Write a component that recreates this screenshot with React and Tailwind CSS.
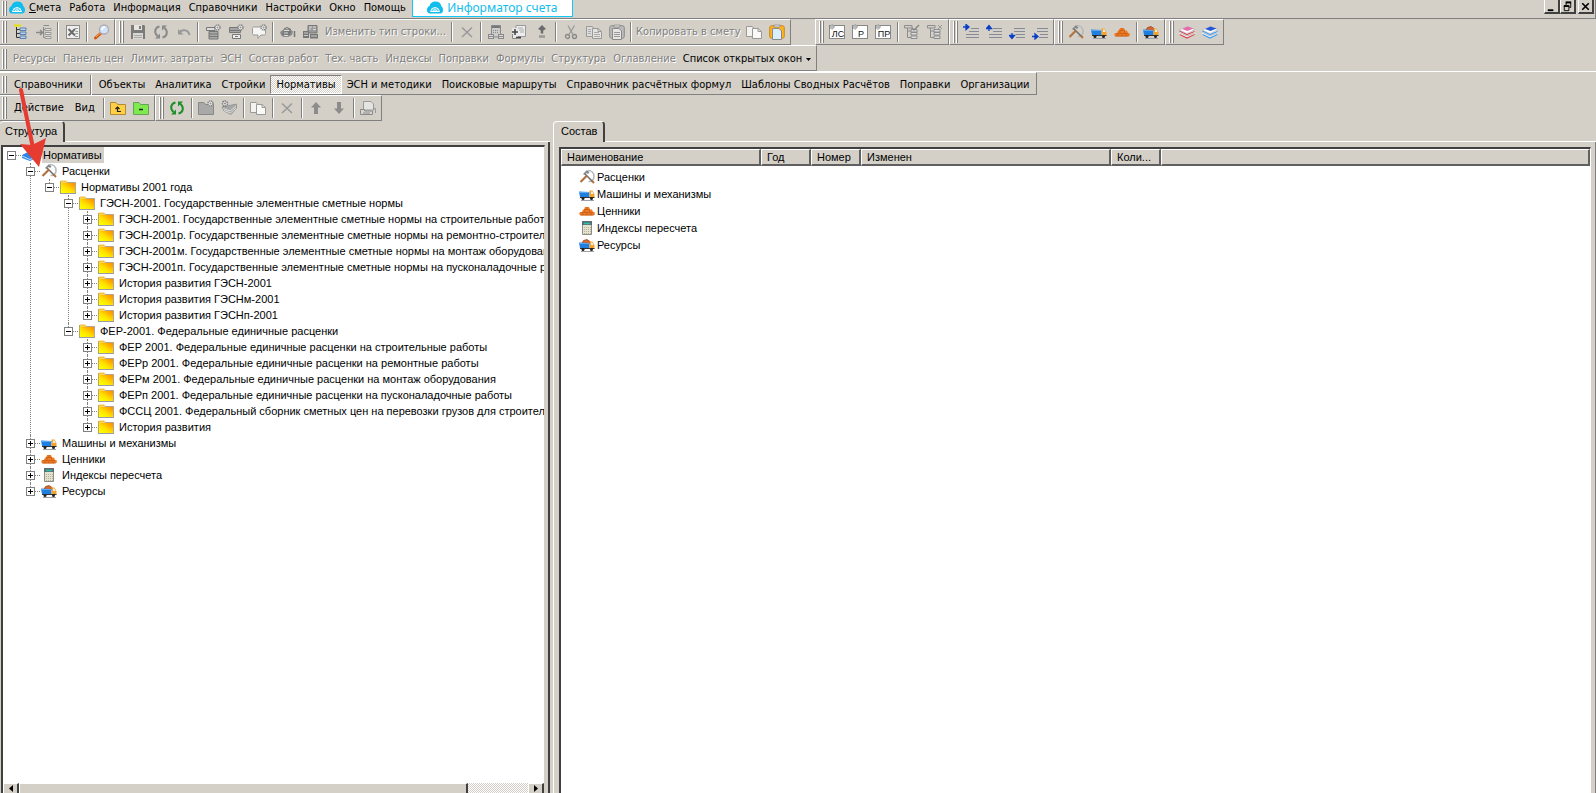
import { useState } from 'react';
import clsx from 'clsx';

/* ---------- icons (16x16) ---------- */

function Svg({ children, className }) {
  return (
    <svg viewBox="0 0 16 16" className={clsx('w-4 h-4 shrink-0', className)} fill="none" aria-hidden="true">
      {children}
    </svg>
  );
}

const Cloud = ({ className }) => (
  <Svg className={className}>
    <path d="M3 13.500C1 13.500 0 12 0 10C0 8 1 6.500 2.500 6C3 3 5.500 1.500 8.500 1.500C12 1.500 14 3.500 14.200 6C15.500 7 16 8.300 16 10C16 12 15 13.500 13 13.500Z" fill="#10bdec" />
    <path d="M3.500 11.500A4.600 5 0 0 1 12.500 11.500Z" stroke="#fff" />
    <path d="M5.500 11.500A2.600 2.600 0 0 1 10.500 11.500M8 7.500V11M5 8.500L7 11M11 8.500L9 11" stroke="#fff" strokeWidth=".7" />
  </Svg>
);

const TreeAdd = () => (
  <Svg>
    <path d="M1 1.500H8" stroke="#e8e000" strokeWidth="2" />
    <path d="M3.500 3V13.500H7M3.500 5.500H7M3.500 9.500H7" stroke="#333" />
    <path d="M7 4H13V6.500H7ZM7 8H13V10.500H7ZM7 12H13V14.500H7Z" fill="#b9d3f0" stroke="#5c7fae" />
  </Svg>
);

const TreeInto = () => (
  <Svg>
    <path d="M0 8.500H6M4 6L6.500 8.500L4 11" stroke="#888" strokeWidth="1.500" />
    <path d="M7.500 3V13.500H10M7.500 1.500H13M8 5.500H10" stroke="#8c8c8c" />
    <path d="M9 4.500H15V6.500H9ZM9 8.500H15V10.500H9ZM9 12.500H15V14.500H9Z" fill="#e4e2de" stroke="#999" />
  </Svg>
);

const Excel = () => (
  <Svg>
    <rect x="1.500" y="1.500" width="13" height="13" fill="#eee" stroke="#8a8a8a" />
    <path d="M3.500 5L10 11.500M10 5L3.500 11.500" stroke="#6a6a6a" strokeWidth="2" />
    <path d="M10 4.500H13M10.500 7.500H13M10.500 9.500H13M10 12.500H13" stroke="#999" />
  </Svg>
);

const Magnifier = () => (
  <Svg>
    <path d="M6.500 9.500L1.500 14" stroke="#d0581c" strokeWidth="3" strokeLinecap="round" />
    <path d="M7 8.500L2 13" stroke="#ffa646" />
    <circle cx="10" cy="5.500" r="4.500" fill="#cfe5fb" stroke="#b3a9b4" strokeWidth="1.300" />
    <path d="M8 6C8 4 9.500 3 11 3" stroke="#fff" strokeWidth="1.500" />
  </Svg>
);

const Save = () => (
  <Svg>
    <path d="M1 1H14L15 2V15H1Z" fill="#7b7b7b" />
    <path d="M4 1H12V6H4Z" fill="#e6e4e0" />
    <path d="M9 2H11V5H9Z" fill="#7b7b7b" />
    <path d="M3 9H13V15H3Z" fill="#d9d7d2" />
    <path d="M4 11.500H12M4 13.500H12" stroke="#aaa" />
  </Svg>
);

const Refresh = ({ color = '#8a8a8a' }) => (
  <Svg>
    <path d="M6.500 2.500C2 3.500 0.500 8.500 4.500 12" stroke={color} strokeWidth="2" />
    <path d="M9.500 13.500C14 12.500 15.500 7.500 11.500 4" stroke={color} strokeWidth="2" />
    <path d="M7 9.500V14.500H2ZM9 6.500V1.500H14Z" fill={color} />
  </Svg>
);

const Undo = () => (
  <Svg>
    <path d="M3 9C5 5.500 12 4.500 13.500 11" stroke="#999" strokeWidth="2" />
    <path d="M2 5V10.500H7.500Z" fill="#999" />
  </Svg>
);

const gear = (
  <>
    <circle cx="12.500" cy="3.500" r="2.500" fill="#eee" stroke="#888" strokeWidth="1.500" strokeDasharray="1.400 .6" />
    <circle cx="12.500" cy="3.500" r="1" fill="#999" />
  </>
);

const TableTop = () => (
  <Svg>
    <path d="M1.500 3.500H10V6.500H1.500Z" fill="#ddd" stroke="#777" />
    <path d="M4 7.500H13V15H4ZM4 10H13M4 12.500H13" fill="#a9a9a9" stroke="#777" />
    {gear}
  </Svg>
);

const TableBottom = () => (
  <Svg>
    <path d="M1.500 3.500H12.500V8.500H1.500Z" fill="#a5a5a5" stroke="#777" />
    <path d="M1 6.500H13" stroke="#777" />
    <path d="M4.500 10.500H12.500V14.500H4.500ZM7 12.500H10" fill="#eee" stroke="#777" />
    {gear}
  </Svg>
);

const Comment = () => (
  <Svg>
    <path d="M1.500 4.500C1.500 3.500 2 3 3 3H13C14 3 14.500 3.500 14.500 4.500V9.500C14.500 10.500 14 11 13 11H10L7 14.500V11H3C2 11 1.500 10.500 1.500 9.500Z" fill="#f5f5f3" stroke="#999" />
    {gear}
  </Svg>
);

const Coins = () => (
  <Svg>
    <path d="M0 8L4 5H10L13 7.500L12 11L8 13H3L1 11Z" fill="#8c8c8c" />
    <path d="M4 5L7 3.500L11 5.500M3 8H11M2 10H10" stroke="#666" />
    <path d="M4 6.500H9M4 9H8M4 11.500H8" stroke="#ddd" />
    <path d="M14.500 7V13" stroke="#777" strokeWidth="1.500" />
  </Svg>
);

const Machines = () => (
  <Svg>
    <path d="M5 1.500H14V9H5Z" fill="#999" stroke="#777" />
    <path d="M6 3H9M10 3H13M6 5H8M10 5.500H13" stroke="#ddd" />
    <path d="M0 7H6V14H0ZM7 10H15V14.500H7Z" fill="#777" />
    <path d="M1 9H5M1 11.500H5M8 12H14" stroke="#ccc" />
  </Svg>
);

const Cross = () => (
  <Svg>
    <path d="M3 3.500L13 13M13 3.500L3 13" stroke="#999" strokeWidth="1.500" />
  </Svg>
);

const CalcCoins = () => (
  <Svg>
    <path d="M3.500 1.500H12.500V13H3.500Z" fill="#ccc" stroke="#888" />
    <path d="M4 3H12" stroke="#777" strokeWidth="2" />
    <path d="M5 6.500H11M5 8.500H11" stroke="#888" strokeDasharray="1 1" />
    <path d="M0 10H6V15H0ZM10 10H16V15H10Z" fill="#888" />
    <path d="M1 11.500H5M1 13.500H5M11 11.500H15M11 13.500H15" stroke="#ddd" />
  </Svg>
);

const PlusMinusDoc = () => (
  <Svg>
    <path d="M5 1.500H14.500V12.500H5Z" fill="#eee" stroke="#999" />
    <path d="M7 4H12M8 6H13M9 8H13" stroke="#aaa" />
    <path d="M1 4H7V15H1Z" fill="#e8e8e8" />
    <path d="M1 8H7M4 5V11M5 13.500H10" stroke="#444" strokeWidth="1.500" />
    <path d="M1.500 10V14.500H10" stroke="#888" />
  </Svg>
);

const UpMinus = () => (
  <Svg>
    <path d="M8 1L12 5L8 7L4 5Z" fill="#6c6c6c" />
    <path d="M8 5V9.500" stroke="#6c6c6c" strokeWidth="2.500" />
    <path d="M5 12.500H11" stroke="#999" strokeWidth="2.500" />
  </Svg>
);

const Cut = () => (
  <Svg>
    <path d="M5 1.500L10 10.500M11.500 1.500L6 10.500" stroke="#999" strokeWidth="1.300" />
    <circle cx="4.500" cy="12.500" r="2" stroke="#888" strokeWidth="1.300" />
    <circle cx="11.500" cy="12.500" r="2" stroke="#888" strokeWidth="1.300" />
  </Svg>
);

const Copy = ({ light }) => (
  <Svg>
    <path d="M.5 2.500H6L9 5V12.500H.5Z" fill={light ? '#f4f3f0' : '#ddd'} stroke="#999" />
    <path d="M6.500 4.500H12L15.500 7.500V14.500H6.500Z" fill={light ? '#fafaf8' : '#e6e4e0'} stroke="#999" />
    <path d="M12 4.500V7.500H15" stroke="#999" />
    {!light && <path d="M2 5.500H5M2 7.500H5M2 9.500H5M8 8.500H13M8 10.500H14M8 12.500H14" stroke="#aaa" />}
  </Svg>
);

const Paste = ({ color }) => (
  <Svg>
    <rect x=".7" y="1.700" width="14.600" height="12.600" rx="2" fill={color ? '#ffb21c' : '#bbb'} stroke={color ? '#c88a1c' : '#8a8a8a'} />
    <path d="M5 1H11V3H5Z" fill="#ddd" stroke="#888" strokeWidth=".7" />
    <path d="M3.500 4.500H10L12.500 7V15.500H3.500Z" fill={color ? '#d9effb' : '#e8e6e2'} stroke="#8a8a8a" />
    {!color && <path d="M5 8.500H11M5 10.500H11M5 12.500H11" stroke="#999" />}
  </Svg>
);

const Badge = ({ text }) => (
  <Svg>
    <rect x=".5" y="1.500" width="15" height="13" fill="#fff" stroke="#888" />
    <text x="9" y="13" textAnchor="middle" fontSize="9" fontFamily="Liberation Sans, sans-serif" fill="#111">{text}</text>
    <circle cx="3" cy="3" r="2" fill="#eee" stroke="#777" strokeDasharray="1.400 .6" />
    <circle cx="3" cy="3" r=".8" fill="#777" />
  </Svg>
);

const TreeEdit = ({ cross }) => (
  <Svg>
    <path d="M.5 1.500H8V4H.5ZM3.500 4V13.500H7M3.500 7H7" stroke="#8c8c8c" />
    <path d="M7 5.500H13V8H7ZM7 8.500H13V11H7ZM7 12H13V14.500H7Z" fill="#ddd" stroke="#8c8c8c" />
    {cross ? <path d="M11 1L15 5M15 1L11 5" stroke="#999" /> : <path d="M8 4L10 6L15 1" stroke="#888" strokeWidth="1.500" />}
  </Svg>
);

const LINE_ARROWS = {
  add: { lines: 'M8 4.500H16M6 7.500H16M3 10.500H16M3 13.500H16', arrow: 'M0 3H5M3 .5V5.500L6 3Z' },
  up: { lines: 'M7 4.500H16M7 7.500H16M3 10.500H16M3 13.500H16', arrow: 'M.5 4.500L3 1.500L5.500 4.500ZM3 4V7' },
  down: { lines: 'M5 4.500H16M5 7.500H16M7 10.500H16M7 13.500H16', arrow: 'M.5 11.500L3 14.500L5.500 11.500ZM3 9V12' },
  into: { lines: 'M5 4.500H16M5 7.500H16M8 10.500H16M7 13.500H16', arrow: 'M0 12.500H4M3 10V15L6 12.500Z' },
};

const LineArrow = ({ kind }) => (
  <Svg>
    <path d={LINE_ARROWS[kind].lines} stroke="#858c98" />
    <path d={LINE_ARROWS[kind].arrow} fill="#0a3fc4" stroke="#0a3fc4" strokeWidth="1.300" />
  </Svg>
);

const Hammer = () => (
  <Svg>
    <path d="M9 1.500C12.500 1.500 15 4 15 7.500C15 10.500 13 12.500 9.500 12.500" stroke="#b4babd" strokeWidth="1.600" />
    <path d="M5.500 4.500L13.500 12.500" stroke="#6d6d70" strokeWidth="1.600" />
    <path d="M8 6.500L1.500 13" stroke="#b0713e" strokeWidth="2.200" />
    <path d="M4 5L8 1L10.500 3.500L9 5L7.500 4L5.500 6Z" fill="#85898c" />
    <path d="M12.500 11.500L15 14" stroke="#b0713e" strokeWidth="2" />
  </Svg>
);

const Truck = ({ loaded }) => (
  <Svg>
    <path d="M2 14.500H15" stroke="#9aa0a6" />
    {loaded && <path d="M3 6L4.500 3.500L8 2.500L11 4.500V6.500H3Z" fill="#d9662a" stroke="#8d3d14" strokeWidth=".7" />}
    <path d="M0 5.500L10.500 6V11H1Z" fill="#1f7fe0" />
    <path d="M0 6.500H10" stroke="#5aa6f0" />
    <path d="M10.500 4.500H13.500L15.500 8V12H10.500Z" fill="#f5a12a" />
    <path d="M12 5.500H13.500L14.700 8H12Z" fill="#dff0fa" />
    <path d="M1 11.500H15.500" stroke="#333" />
    <circle cx="4" cy="12.500" r="1.500" fill="#222" />
    <circle cx="12.500" cy="12.500" r="1.500" fill="#222" />
  </Svg>
);

const Bricks = () => (
  <Svg>
    <path d="M6 4H10L11 6.500H13L14 9H15.500L16 11.500L13 12.500H2L0 11L1 9H3L4 6.500H5Z" fill="#f07c26" />
    <path d="M5 6.500H11M2 9.500H14M1 12H15M8 4V6M6 7V9M10.500 7V9M4 10V12M8 10V12M12 10V12" stroke="#b9500f" strokeWidth=".6" />
  </Svg>
);

const Calc = () => (
  <Svg>
    <path d="M3.500 1.500H12.500V14.500H3.500Z" fill="#e5e2cf" stroke="#8c8c84" />
    <path d="M3 1H13V5H3Z" fill="#5e6e70" />
    <path d="M5 3.500H11" stroke="#27c0b0" strokeWidth="1.500" />
    <path d="M5 7.500H12M5 9.500H12M5 11.500H12M5 13.500H12" stroke="#b5b29c" strokeDasharray="1 1" />
  </Svg>
);

const Books = ({ top, side }) => (
  <Svg>
    <path d="M0 9L8 5L16 8V9.500L15 10V11.500L8 14.500L0 11V9.500Z" fill="#f5f5f5" />
    <path d="M.5 7L8 10.500L15.500 7.500M.5 10.500L8 14L15.500 10.500" stroke={side} strokeWidth="1.300" />
    <path d="M.5 8.500L8 12L15.500 9" stroke="#b8bcc4" />
    <path d="M0 6L8.500 2.500L16 5.500L8 9.500Z" fill="#fff" stroke="#aab" strokeWidth=".6" />
    <path d="M3 5L8.500 2.500L14.500 4.500L8.500 7Z" fill={top} />
  </Svg>
);

const BlueBook = () => (
  <Svg>
    <path d="M0 8L8 4L16 7V10L8 14L0 11Z" fill="#2f86e6" />
    <path d="M0 9L8 12.500L16 9" stroke="#bfe0ff" />
  </Svg>
);

const Folder = () => (
  <Svg>
    <defs>
      <linearGradient id="folderFill" x1="0" y1="1" x2="1" y2="0">
        <stop offset=".1" stopColor="#ffff00" />
        <stop offset=".45" stopColor="#ffe000" />
        <stop offset="1" stopColor="#ff7a00" />
      </linearGradient>
    </defs>
    <path d="M1 1.500H6L8 3.500H1Z" fill="#f3c544" />
    <path d="M0 3.500H16V14H0Z" fill="url(#folderFill)" />
    <path d="M7 3.500H15.500V14" stroke="#b4a890" />
    <path d="M0 14.500H16" stroke="#9a9aa4" />
    <path d="M.5 2V14" stroke="#b8a860" />
  </Svg>
);

const ToolFolder = ({ fill, stroke, mark }) => (
  <Svg>
    <path d="M.5 14.500V2.500H6L7.500 4.500H15.500V14.500Z" fill={fill} stroke={stroke} />
    {mark === 'up' && <path d="M7.500 11.500H11M7.500 12V7.500M5.500 9L7.500 7L9.500 9" stroke="#222" strokeWidth="1.200" />}
    {mark === 'minus' && <path d="M6 9.500H10" stroke="#222" strokeWidth="1.500" />}
    {mark === 'gear' && gear}
  </Svg>
);

const StackGear = () => (
  <Svg>
    <path d="M1 7L11 5L15.500 4V8L10 14.500L3 11Z" fill="#a6a6a6" stroke="#999" />
    <path d="M2 8.500L9 11L15 6M3 10.500L9.500 13L15 8" stroke="#ddd" />
    <circle cx="4" cy="3.500" r="2.500" fill="#eee" stroke="#777" strokeWidth="1.500" strokeDasharray="1.500 .7" />
    <circle cx="4" cy="3.500" r="1" fill="#888" />
  </Svg>
);

const Arrow = ({ down }) => (
  <Svg className={down && 'rotate-180'}>
    <path d="M8 2L13 7.500H10V14H6V7.500H3Z" fill="#8c8c8c" />
  </Svg>
);

const PrintDoc = () => (
  <Svg>
    <path d="M3.500 1.500H11L13.500 4V10H3.500Z" fill="#e6e4e0" stroke="#999" />
    <path d="M.5 9.500H4.500V11H12.500V14.500H.5ZM3 13H10" fill="#d9d7d2" stroke="#8a8a8a" />
    <path d="M13.500 8.500H15.500V13" stroke="#999" />
  </Svg>
);

/* ---------- toolbar parts ---------- */

function Grip({ first }) {
  return (
    <div className={clsx('flex gap-px pr-0.5 self-stretch py-px', first ? 'pl-0.5' : 'pl-[3px]')}>
      <i className="w-0.5 h-full border-l border-l-white border-r border-r-[#808080]" />
      <i className="w-0.5 h-full border-l border-l-white border-r border-r-[#808080]" />
    </div>
  );
}

function Band({ children, className, first }) {
  return (
    <div className={clsx('flex items-center h-full pr-px border-t border-t-white border-r border-r-[#808080] border-b border-b-[#808080]', !first && 'border-l border-l-white', className)}>
      <Grip first={first} />
      {children}
    </div>
  );
}

const Sep = () => <div className="w-0.5 h-5 mx-0.5 border-l border-l-[#808080] border-r border-r-white" />;

function IconButton({ label, children, disabled }) {
  return (
    <button aria-label={label} disabled={disabled} className="w-[23px] h-[22px] flex items-center justify-center shrink-0">
      {children}
    </button>
  );
}

const disabledText = 'text-[#808080] [text-shadow:1px_1px_0_#fff]';

const MENU = ['Работа', 'Информация', 'Справочники', 'Настройки', 'Окно', 'Помощь'];

const PANELS = ['Ресурсы', 'Панель цен', 'Лимит. затраты', 'ЭСН', 'Состав работ', 'Тех. часть', 'Индексы', 'Поправки', 'Формулы', 'Структура', 'Оглавление'];

const SECTIONS = [
  'Объекты',
  'Аналитика',
  'Стройки',
  'Нормативы',
  'ЭСН и методики',
  'Поисковые маршруты',
  'Справочник расчётных формул',
  'Шаблоны Сводных Расчётов',
  'Поправки',
  'Организации',
];

function MenuBar() {
  return (
    <header className="h-[19px] flex items-start border-b border-r border-[#808080]">
      <div className="h-[17px] flex"><Grip first /></div>
      <Cloud />
      <nav className="flex h-[15px] items-center pr-0.5">
        <button className="px-1"><u>С</u>мета</button>
        {MENU.map((item) => (
          <button key={item} className="px-1">{item}</button>
        ))}
      </nav>
      <button className="w-[161px] h-[17px] flex items-center justify-center gap-1 bg-white border border-t-0 border-[#10c8f8] text-[#10bdec] font-['Noto_Sans',sans-serif] text-[12px]">
        <Cloud />
        Информатор счета
      </button>
      <div className="ml-auto flex pr-px">
        <WinButton label="Свернуть"><path d="M3 10H9V12H3Z" fill="#000" /></WinButton>
        <WinButton label="Восстановить">
          <path d="M5.500 6V3H10.500V8H9" stroke="#000" /><path d="M5 2.500H11" stroke="#000" strokeWidth="2" />
          <path d="M3.500 6.500H8.500V11.500H3.500Z" stroke="#000" /><path d="M3 6.500H9" stroke="#000" strokeWidth="2" />
        </WinButton>
        <div className="w-0.5" />
        <WinButton label="Закрыть"><path d="M3.500 3.500L10.500 10.500M10.500 3.500L3.500 10.500" stroke="#000" strokeWidth="1.800" /></WinButton>
      </div>
    </header>
  );
}

function WinButton({ label, children }) {
  return (
    <button aria-label={label} className="w-4 h-3.5 border-l border-l-white border-r-2 border-r-[#404040] border-b-2 border-b-[#404040]">
      <svg viewBox="0 0 14 14" className="w-[13px] h-[13px]" fill="none">{children}</svg>
    </button>
  );
}

function MainToolbar() {
  return (
    <div className="h-[26px] flex">
      <Band first>
        <IconButton label="Структура"><TreeAdd /></IconButton>
        <IconButton label="Вставить уровень" disabled><TreeInto /></IconButton>
        <Sep />
        <IconButton label="Excel" disabled><Excel /></IconButton>
        <Sep />
        <IconButton label="Поиск"><Magnifier /></IconButton>
      </Band>
      <Band>
        <IconButton label="Сохранить" disabled><Save /></IconButton>
        <IconButton label="Обновить" disabled><Refresh /></IconButton>
        <IconButton label="Отменить" disabled><Undo /></IconButton>
        <Sep />
        <IconButton label="Добавить строку сверху" disabled><TableTop /></IconButton>
        <IconButton label="Добавить строку снизу" disabled><TableBottom /></IconButton>
        <IconButton label="Комментарий" disabled><Comment /></IconButton>
        <Sep />
        <IconButton label="Материалы" disabled><Coins /></IconButton>
        <IconButton label="Механизмы" disabled><Machines /></IconButton>
        <button disabled className={clsx('px-[3px]', disabledText)}>Изменить тип строки...</button>
        <Sep />
        <IconButton label="Удалить" disabled><Cross /></IconButton>
        <Sep />
        <IconButton label="Расчёт" disabled><CalcCoins /></IconButton>
        <IconButton label="Плюс минус" disabled><PlusMinusDoc /></IconButton>
        <IconButton label="Поднять" disabled><UpMinus /></IconButton>
        <Sep />
        <IconButton label="Вырезать" disabled><Cut /></IconButton>
        <IconButton label="Копировать" disabled><Copy /></IconButton>
        <IconButton label="Вставить" disabled><Paste /></IconButton>
        <Sep />
        <button disabled className={clsx('px-0.5', disabledText)}>Копировать в смету</button>
        <IconButton label="Копии" disabled><Copy light /></IconButton>
        <IconButton label="Вставить из буфера"><Paste color /></IconButton>
      </Band>
      <Band className="ml-6">
        <IconButton label="Локальная смета"><Badge text="ЛС" /></IconButton>
        <IconButton label="Раздел"><Badge text="Р" /></IconButton>
        <IconButton label="Подраздел"><Badge text="ПР" /></IconButton>
        <Sep />
        <IconButton label="Принять" disabled><TreeEdit /></IconButton>
        <IconButton label="Убрать" disabled><TreeEdit cross /></IconButton>
      </Band>
      <Band>
        <IconButton label="Вставить строку"><LineArrow kind="add" /></IconButton>
        <IconButton label="Строка вверх"><LineArrow kind="up" /></IconButton>
        <IconButton label="Строка вниз"><LineArrow kind="down" /></IconButton>
        <IconButton label="Строка внутрь"><LineArrow kind="into" /></IconButton>
      </Band>
      <Band>
        <IconButton label="Расценки"><Hammer /></IconButton>
        <IconButton label="Машины и механизмы"><Truck /></IconButton>
        <IconButton label="Ценники"><Bricks /></IconButton>
        <Sep />
        <IconButton label="Ресурсы"><Truck loaded /></IconButton>
      </Band>
      <Band>
        <IconButton label="Красные сборники"><Books top="#e86aa8" side="#d84a4a" /></IconButton>
        <IconButton label="Синие сборники"><Books top="#2456d8" side="#3b9bea" /></IconButton>
      </Band>
    </div>
  );
}

function PanelBar() {
  return (
    <div className="h-[26px] flex">
      <Band first className="pt-0.5">
        {PANELS.map((item) => (
          <button key={item} disabled className={clsx('pl-1 pr-[3px]', disabledText)}>{item}</button>
        ))}
        <button className="px-1 flex items-center gap-1">
          Список открытых окон
          <svg viewBox="0 0 5 3" className="w-[5px] h-[3px]"><path d="M0 0H5L2.500 3Z" fill="#000" /></svg>
        </button>
      </Band>
    </div>
  );
}

function SectionBar({ active, onChange }) {
  return (
    <div className="h-6 flex border-t border-t-white">
      <Band first className="pt-0.5">
        <button className="px-[5px]">Справочники</button>
        <Sep />
        {SECTIONS.map((item) => (
          <button
            key={item}
            onClick={() => onChange(item)}
            className={clsx(
              'h-[19px] border',
              item === active
                ? 'px-[5px] border-t-[#808080] border-l-[#808080] border-b-white border-r-white bg-[repeating-conic-gradient(#fff_0_25%,#d4d0c8_0_50%)] bg-[length:2px_2px]'
                : 'px-1 border-transparent'
            )}
          >
            {item}
          </button>
        ))}
      </Band>
    </div>
  );
}

function ActionBar() {
  return (
    <div className="h-[26px] flex">
      <Band first>
        <button className="px-[5px]">Действие</button>
        <button className="px-1.5">Вид</button>
        <Sep />
        <IconButton label="На уровень вверх"><ToolFolder fill="#ffcf45" stroke="#b58a35" mark="up" /></IconButton>
        <IconButton label="Свернуть все"><ToolFolder fill="#7dea4e" stroke="#6aa05a" mark="minus" /></IconButton>
      </Band>
      <Band>
        <IconButton label="Обновить"><Refresh color="#1f8f2a" /></IconButton>
        <Sep />
        <IconButton label="Новая папка" disabled><ToolFolder fill="#a9a9a9" stroke="#888" mark="gear" /></IconButton>
        <IconButton label="Новый сборник" disabled><StackGear /></IconButton>
        <Sep />
        <IconButton label="Копировать" disabled><Copy light /></IconButton>
        <Sep />
        <IconButton label="Удалить" disabled><Cross /></IconButton>
        <Sep />
        <IconButton label="Вверх" disabled><Arrow /></IconButton>
        <IconButton label="Вниз" disabled><Arrow down /></IconButton>
        <Sep />
        <IconButton label="Печать" disabled><PrintDoc /></IconButton>
      </Band>
    </div>
  );
}

/* ---------- tree ---------- */

const leaf = (label) => ({ label, icon: Folder, closed: true });

const TREE = {
  label: 'Нормативы',
  icon: BlueBook,
  children: [
    {
      label: 'Расценки',
      icon: Hammer,
      children: [
        {
          label: 'Нормативы 2001 года',
          icon: Folder,
          children: [
            {
              label: 'ГЭСН-2001. Государственные элементные сметные нормы',
              icon: Folder,
              children: [
                leaf('ГЭСН-2001. Государственные элементные сметные нормы на строительные работы'),
                leaf('ГЭСН-2001р. Государственные элементные сметные нормы на ремонтно-строительные работы'),
                leaf('ГЭСН-2001м. Государственные элементные сметные нормы на монтаж оборудования'),
                leaf('ГЭСН-2001п. Государственные элементные сметные нормы на пусконаладочные работы'),
                leaf('История развития ГЭСН-2001'),
                leaf('История развития ГЭСНм-2001'),
                leaf('История развития ГЭСНп-2001'),
              ],
            },
            {
              label: 'ФЕР-2001. Федеральные единичные расценки',
              icon: Folder,
              children: [
                leaf('ФЕР 2001. Федеральные единичные расценки на строительные работы'),
                leaf('ФЕРр 2001. Федеральные единичные расценки на ремонтные работы'),
                leaf('ФЕРм 2001. Федеральные единичные расценки на монтаж оборудования'),
                leaf('ФЕРп 2001. Федеральные единичные расценки на пусконаладочные работы'),
                leaf('ФССЦ 2001. Федеральный сборник сметных цен на перевозки грузов для строительства'),
                leaf('История развития'),
              ],
            },
          ],
        },
      ],
    },
    { label: 'Машины и механизмы', icon: Truck, closed: true },
    { label: 'Ценники', icon: Bricks, closed: true },
    { label: 'Индексы пересчета', icon: Calc, closed: true },
    { label: 'Ресурсы', icon: () => <Truck loaded />, closed: true },
  ],
};

function TreeNode({ node, last = true, root }) {
  const [open, setOpen] = useState(!node.closed);
  const Icon = node.icon;

  return (
    <li role="treeitem" aria-expanded={open} className={clsx('flex', root && '-ml-px')}>
      {/* guide line running past this node down to its next sibling */}
      <div className="w-[19px] shrink-0 flex flex-col items-center">
        <div className={clsx('h-1 border-l border-dotted', root ? 'border-transparent' : 'border-[#808080]')} />
        <button
          aria-label={open ? 'Свернуть' : 'Развернуть'}
          onClick={() => setOpen(!open)}
          className="w-[9px] h-[9px] shrink-0 border border-[#808080] bg-white flex items-center justify-center"
        >
          <svg viewBox="0 0 5 5" className="w-[5px] h-[5px]">
            <path d="M0 2H5V3H0Z" fill="#000" />
            {!open && <path d="M2 0H3V5H2Z" fill="#000" />}
          </svg>
        </button>
        {!last && <div className="flex-1 border-l border-dotted border-[#808080]" />}
      </div>
      <div>
        <div className="h-4 flex items-center">
          <div className="w-[5px] -ml-[5px] border-t border-dotted border-[#808080]" />
          <div className="w-[19px] pl-px"><Icon /></div>
          <span className={clsx('ml-0.5 pl-px pr-0.5 leading-4 whitespace-nowrap', root && 'bg-[#d4d0c8]')}>{node.label}</span>
        </div>
        {open && node.children && (
          <ul role="group">
            {node.children.map((child, i) => (
              <TreeNode key={child.label} node={child} last={i === node.children.length - 1} />
            ))}
          </ul>
        )}
      </div>
    </li>
  );
}

function Tab({ children, className }) {
  return (
    <button className={clsx('h-[21px] pr-1.5 pb-0.5 border-t border-t-white border-r-2 border-r-[#404040] rounded-t-sm', className)}>
      {children}
    </button>
  );
}

const scrollButton = 'h-full w-4 shrink-0 flex items-center justify-center bg-[#d4d0c8] border-t border-l border-white border-r-2 border-r-[#404040]';

function StructurePane() {
  return (
    <section className="w-[550px] shrink-0 flex flex-col">
      <div className="h-[21px] flex">
        <Tab className="pl-[5px]">Структура</Tab>
        <div className="flex-1 border-b border-b-white" />
      </div>
      <div className="flex-1 min-h-0 flex flex-col pt-[3px] pl-px pr-[3px] border-r-2 border-r-[#404040]">
        <div className="flex-1 min-h-0 flex flex-col bg-white border-t-2 border-l-2 border-[#404040] border-r border-r-[#d4d0c8]">
          <ul role="tree" className="flex-1 min-h-0 overflow-hidden">
            <TreeNode node={TREE} root />
          </ul>
          {/* horizontal scrollbar, lower part runs off the window */}
          <div className="h-2.5 shrink-0 flex bg-[repeating-conic-gradient(#fff_0_25%,#d4d0c8_0_50%)] bg-[length:2px_2px] overflow-hidden">
            <button aria-label="Влево" className={scrollButton}>
              <svg viewBox="0 0 4 7" className="w-1 h-[7px]"><path d="M4 0V7L0 3.500Z" fill="#000" /></svg>
            </button>
            <div className="w-[83%] bg-[#d4d0c8] border-t border-l border-white border-r-2 border-r-[#404040]" />
            <div className="flex-1" />
            <button aria-label="Вправо" className={scrollButton}>
              <svg viewBox="0 0 4 7" className="w-1 h-[7px]"><path d="M0 0V7L4 3.500Z" fill="#000" /></svg>
            </button>
          </div>
        </div>
      </div>
    </section>
  );
}

/* ---------- contents list ---------- */

const ROWS = TREE.children.map(({ label, icon }) => ({ label, icon }));

function Th({ children }) {
  return (
    <th className="h-[17px] p-0 font-normal text-left border-t border-l border-white border-r-2 border-b-2 border-r-[#606060] border-b-[#606060]">
      <div className="pl-[5px] leading-[14px] truncate">{children}</div>
    </th>
  );
}

function ContentsPane() {
  return (
    <section className="ml-[3px] flex-1 min-w-0 flex flex-col">
      <div className="h-[21px] flex">
        <Tab className="pl-[7px] border-l border-l-white">Состав</Tab>
        <div className="flex-1 border-b border-b-white" />
      </div>
      <div className="flex-1 min-h-0 flex pt-[5px] pl-[5px] pr-1 border-l border-l-white border-r border-r-[#808080]">
        <div className="flex-1 min-w-0 bg-white border-t-2 border-l-2 border-[#404040] border-r border-r-white">
          <table className="w-full table-fixed border-separate border-spacing-0">
            <colgroup>
              <col className="w-[200px]" />
              <col className="w-[50px]" />
              <col className="w-[50px]" />
              <col className="w-[250px]" />
              <col className="w-[50px]" />
              <col />
            </colgroup>
            <thead className="bg-[#d4d0c8]">
              <tr>
                <Th>Наименование</Th>
                <Th>Год</Th>
                <Th>Номер</Th>
                <Th>Изменен</Th>
                <Th>Коли...</Th>
                <Th />
              </tr>
            </thead>
            <tbody>
              <tr className="h-0.5" />
              {ROWS.map(({ label, icon: Icon }) => (
                <tr key={label}>
                  <td className="h-[17px] p-0 pl-[18px]">
                    <div className="flex items-center gap-0.5 leading-4">
                      <Icon />
                      {label}
                    </div>
                  </td>
                </tr>
              ))}
            </tbody>
          </table>
        </div>
      </div>
    </section>
  );
}

export default function App() {
  const [section, setSection] = useState('Нормативы');

  return (
    <div className="relative h-screen flex flex-col overflow-hidden bg-[#d4d0c8] text-black text-[11px] leading-[14px] whitespace-nowrap font-['DejaVu_Sans_Condensed',sans-serif]">
      <MenuBar />
      <MainToolbar />
      <PanelBar />
      <SectionBar active={section} onChange={setSection} />
      <ActionBar />
      <main className="flex-1 min-h-0 flex font-['Liberation_Sans',sans-serif]">
        <StructurePane />
        <ContentsPane />
      </main>

      {/* pointer to the "Расценки" branch */}
      <svg viewBox="0 0 30 80" className="absolute left-[18px] top-[88px] w-[30px] h-20 pointer-events-none">
        <path d="M3 2L15 60" stroke="#e53b30" strokeWidth="4" strokeLinecap="round" />
        <path d="M2 56L14 57L28 50L21 79Z" fill="#e53b30" />
      </svg>
    </div>
  );
}
